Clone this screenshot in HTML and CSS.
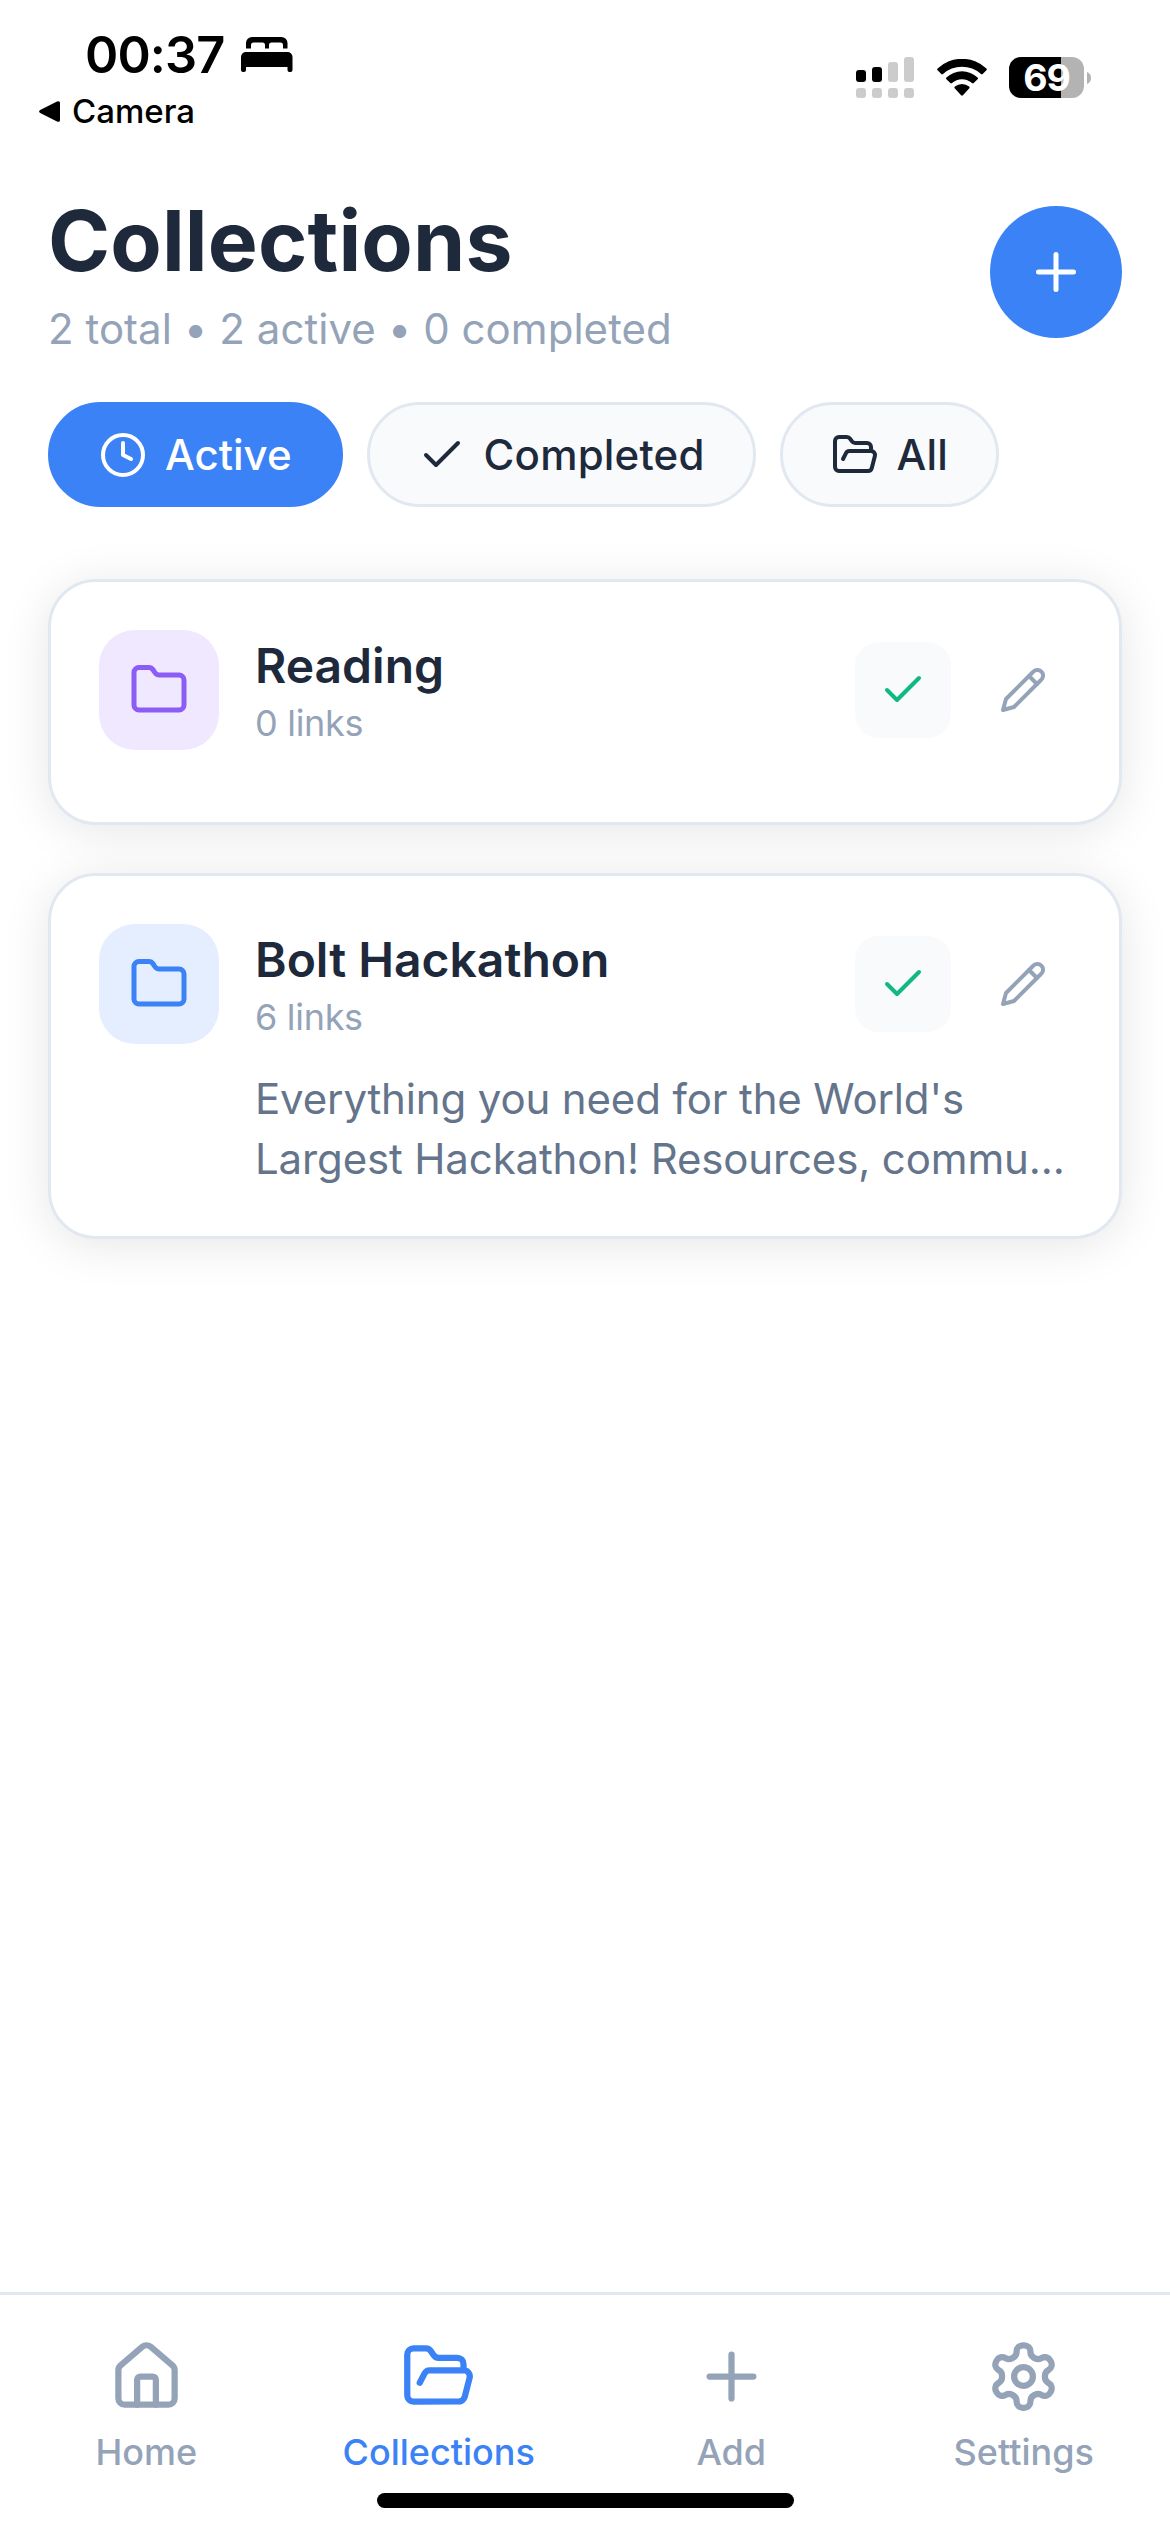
FILE: index.html
```html
<!DOCTYPE html>
<html lang="en">
<head>
<meta charset="utf-8">
<title>Collections</title>
<link rel="stylesheet" href="styles.css">
</head>
<body>
<svg class="defs" aria-hidden="true">
  <symbol id="check" viewBox="0 0 24 24"><path d="M20 6 9 17l-5-5"/></symbol>
  <symbol id="plus" viewBox="0 0 24 24"><path d="M5 12h14M12 5v14"/></symbol>
  <symbol id="clock" viewBox="0 0 24 24"><circle cx="12" cy="12" r="10"/><path d="M12 6v6l4 2"/></symbol>
  <symbol id="folder" viewBox="0 0 24 24"><path d="M20 20a2 2 0 0 0 2-2V8a2 2 0 0 0-2-2h-7.9a2 2 0 0 1-1.69-.9L9.6 3.9A2 2 0 0 0 7.93 3H4a2 2 0 0 0-2 2v13a2 2 0 0 0 2 2Z"/></symbol>
  <symbol id="folder-open" viewBox="0 0 24 24"><path d="m6 14 1.5-2.9A2 2 0 0 1 9.24 10H20a2 2 0 0 1 1.94 2.5l-1.54 6a2 2 0 0 1-1.95 1.5H4a2 2 0 0 1-2-2V5a2 2 0 0 1 2-2h3.9a2 2 0 0 1 1.69.9l.81 1.2a2 2 0 0 0 1.67.9H18a2 2 0 0 1 2 2v2"/></symbol>
  <symbol id="pencil" viewBox="0 0 24 24"><path d="M17 3a2.85 2.83 0 1 1 4 4L7.5 20.5 2 22l1.5-5.5Z"/><path d="m15 5 4 4"/></symbol>
  <symbol id="home" viewBox="0 0 24 24"><path d="M15 21v-8a1 1 0 0 0-1-1h-4a1 1 0 0 0-1 1v8"/><path d="M3 10a2 2 0 0 1 .709-1.528l7-5.999a2 2 0 0 1 2.582 0l7 5.999A2 2 0 0 1 21 10v9a2 2 0 0 1-2 2H5a2 2 0 0 1-2-2z"/></symbol>
  <symbol id="settings" viewBox="0 0 24 24"><path d="M12.22 2h-.44a2 2 0 0 0-2 2v.18a2 2 0 0 1-1 1.73l-.43.25a2 2 0 0 1-2 0l-.15-.08a2 2 0 0 0-2.73.73l-.22.38a2 2 0 0 0 .73 2.73l.15.1a2 2 0 0 1 1 1.72v.51a2 2 0 0 1-1 1.74l-.15.09a2 2 0 0 0-.73 2.73l.22.38a2 2 0 0 0 2.73.73l.15-.08a2 2 0 0 1 2 0l.43.25a2 2 0 0 1 1 1.73V20a2 2 0 0 0 2 2h.44a2 2 0 0 0 2-2v-.18a2 2 0 0 1 1-1.73l.43-.25a2 2 0 0 1 2 0l.15.08a2 2 0 0 0 2.73-.73l.22-.39a2 2 0 0 0-.73-2.73l-.15-.08a2 2 0 0 1-1-1.74v-.5a2 2 0 0 1 1-1.74l.15-.09a2 2 0 0 0 .73-2.73l-.22-.38a2 2 0 0 0-2.73-.73l-.15.08a2 2 0 0 1-2 0l-.43-.25a2 2 0 0 1-1-1.73V4a2 2 0 0 0-2-2z"/><circle cx="12" cy="12" r="3"/></symbol>
</svg>

<div class="status-bar">
  <div class="status-left">
    <div class="clock-row">
      <span class="time">00:37</span>
      <svg class="bed" viewBox="0 0 52 35"><path d="M5 11.500V6a6 6 0 0 1 6-6h29.500a6 6 0 0 1 6 6v5.500h-4.500V8q0-2.500-2.500-2.500h-9Q28 5.500 28 8v3.500h-4V8q0-2.500-2.500-2.500h-9Q10 5.500 10 8v3.500Z"/><path d="M0 33V20a5 5 0 0 1 5-5h41.500a5 5 0 0 1 5 5v13q0 2-2 2h-1q-2 0-2-2v-3H5v3q0 2-2 2H2q-2 0-2-2Z"/></svg>
    </div>
    <div class="back-row">
      <svg class="back-arrow" viewBox="0 0 21 21"><path d="M1.200 8.900 18 .5q3-1.200 3 1.500v17q0 2.700-3 1.500L1.200 12.100Q-1 10.500 1.200 8.900Z"/></svg>
      <span class="back-label">Camera</span>
    </div>
  </div>
  <div class="status-right">
    <svg class="signal" viewBox="0 0 58 41"><g class="on"><rect y="13" width="10" height="12" rx="3"/><rect x="16" y="10" width="10" height="15" rx="3"/></g><rect x="32" y="5" width="10" height="20" rx="3"/><rect x="48" width="10" height="25" rx="3"/><rect y="31" width="10" height="10" rx="3"/><rect x="16" y="31" width="10" height="10" rx="3"/><rect x="32" y="31" width="10" height="10" rx="3"/><rect x="48" y="31" width="10" height="10" rx="3"/></svg>
    <svg class="wifi" viewBox="0 0 50 37"><path d="M.6 9.500a35.500 35.500 0 0 1 48.800 0q.9.900 0 1.800l-3.700 3.800q-.8.800-1.700 0a28 28 0 0 0-38 0q-.9.800-1.700 0L.6 11.300q-.9-.9 0-1.800Z"/><path d="M9.400 18.400a23 23 0 0 1 31.200 0q.9.900 0 1.800l-3.900 3.900q-.8.700-1.700 0a15 15 0 0 0-20 0q-.9.700-1.700 0l-3.900-3.900q-.9-.9 0-1.800Z"/><path d="M17.900 27.600a11 11 0 0 1 14.200 0q1 .9 0 1.900l-6.200 6.800q-.9.900-1.800 0l-6.200-6.800q-1-1 0-1.900Z"/></svg>
    <div class="battery"><span class="level">69</span></div>
    <svg class="nub" viewBox="0 0 4 12"><path d="M0 0q4 1.500 4 6t-4 6Z"/></svg>
  </div>
</div>

<header class="header">
  <div class="heading">
    <h1 class="title">Collections</h1>
    <p class="summary">2 total • 2 active • 0 completed</p>
  </div>
  <button class="fab"><svg class="icon icon-60"><use href="#plus"/></svg></button>
</header>

<div class="filters">
  <button class="chip chip-active"><svg class="icon icon-48"><use href="#clock"/></svg><span>Active</span></button>
  <button class="chip"><svg class="icon icon-48"><use href="#check"/></svg><span>Completed</span></button>
  <button class="chip"><svg class="icon icon-48"><use href="#folder-open"/></svg><span>All</span></button>
</div>

<main class="list">
  <article class="card">
    <div class="card-head">
      <div class="badge purple"><svg class="icon icon-60"><use href="#folder"/></svg></div>
      <div class="card-text">
        <h2 class="card-title">Reading</h2>
        <p class="card-count">0 links</p>
      </div>
      <button class="action done"><svg class="icon icon-48"><use href="#check"/></svg></button>
      <button class="action edit"><svg class="icon icon-48"><use href="#pencil"/></svg></button>
    </div>
  </article>
  <article class="card">
    <div class="card-head">
      <div class="badge blue"><svg class="icon icon-60"><use href="#folder"/></svg></div>
      <div class="card-text">
        <h2 class="card-title">Bolt Hackathon</h2>
        <p class="card-count">6 links</p>
      </div>
      <button class="action done"><svg class="icon icon-48"><use href="#check"/></svg></button>
      <button class="action edit"><svg class="icon icon-48"><use href="#pencil"/></svg></button>
    </div>
    <p class="description">Everything you need for the World's<br>Largest Hackathon! Resources, commu...</p>
  </article>
</main>

<nav class="tabs">
  <div class="tab-row">
    <a class="tab"><svg class="icon icon-75"><use href="#home"/></svg><span>Home</span></a>
    <a class="tab tab-active"><svg class="icon icon-75"><use href="#folder-open"/></svg><span>Collections</span></a>
    <a class="tab"><svg class="icon icon-75"><use href="#plus"/></svg><span>Add</span></a>
    <a class="tab"><svg class="icon icon-75"><use href="#settings"/></svg><span>Settings</span></a>
  </div>
  <div class="home-indicator"></div>
</nav>
</body>
</html>
```
FILE: styles.css
```css
* { box-sizing: border-box; margin: 0; padding: 0; }

body {
  display: flex;
  flex-direction: column;
  height: 2532px;
  background: #fff;
  color: #1e293b;
  font-family: Inter, "Liberation Sans", sans-serif;
  overflow: hidden;
}

button { font: inherit; color: inherit; border: 0; background: none; }

.defs { display: none; }

.icon {
  flex: none;
  fill: none;
  stroke: currentColor;
  stroke-width: 2;
  stroke-linecap: round;
  stroke-linejoin: round;
}
.icon-48 { width: 48px; height: 48px; }
.icon-60 { width: 60px; height: 60px; }
.icon-75 { width: 75px; height: 75px; }

/* Status bar */
.status-bar {
  display: flex;
  justify-content: space-between;
  height: 189px;
  color: #000;
}
.status-left { padding-top: 24px; }
.clock-row { display: flex; align-items: flex-start; padding-left: 85px; }
.time {
  width: 156px;
  font-size: 50.500px;
  font-weight: 600;
  line-height: 61px;
  letter-spacing: -0.9px;
}
.bed { width: 52px; height: 35px; margin-top: 13px; }
.back-row { display: flex; align-items: center; gap: 12px; padding-left: 39px; margin-top: 5px; }
.back-arrow { width: 21px; height: 21px; }
.back-label { font-size: 33px; font-weight: 500; line-height: 42px; }

.status-right { display: flex; align-items: flex-start; padding: 57px 79px 0 0; }
.signal { width: 58px; height: 41px; fill: #ccc; }
.signal .on { fill: #000; }
.wifi { width: 50px; height: 37px; margin: 2px 22px 0 23px; }
.battery {
  width: 75px;
  height: 41px;
  border-radius: 12px;
  background: linear-gradient(90deg, #000 52px, #b3b3b3 52px);
  color: #fff;
  text-align: center;
}
.level { font-size: 37.500px; font-weight: 700; line-height: 41px; display: block; letter-spacing: -1px; }
.nub { width: 4px; height: 12px; margin: 15px 0 0 3px; fill: #b3b3b3; }

/* Header */
.header {
  display: flex;
  justify-content: space-between;
  align-items: center;
  padding: 0 48px;
  height: 165px;
}
.title { font-size: 84px; font-weight: 700; line-height: 104px; margin-bottom: 10px; letter-spacing: 0.15px; }
.summary { font-size: 42px; line-height: 51px; letter-spacing: 0.04px; color: #94a3b8; }
.fab {
  display: flex;
  align-items: center;
  justify-content: center;
  width: 132px;
  height: 132px;
  border-radius: 50%;
  background: #3b82f6;
  color: #fff;
}

/* Filters */
.filters { display: flex; gap: 24px; padding: 48px 48px 72px; }
.chip {
  display: flex;
  align-items: center;
  gap: 18px;
  height: 105px;
  padding: 0 48px;
  border: 3px solid #e2e8f0;
  border-radius: 60px;
  background: #f8fafc;
  font-size: 42px;
  font-weight: 500;
  line-height: 51px;
  letter-spacing: 0.2px;
}
.chip-active { background: #3b82f6; border-color: #3b82f6; color: #fff; letter-spacing: 0; }

/* Cards */
.list { display: flex; flex-direction: column; gap: 48px; padding: 0 48px; flex: 1; }
.card {
  padding: 48px;
  border: 3px solid #e2e8f0;
  border-radius: 48px;
  background: #fff;
  box-shadow: 0 6px 48px rgba(0, 0, 0, 0.1);
}
.card-head { display: flex; align-items: center; margin-bottom: 24px; }
.badge {
  display: flex;
  align-items: center;
  justify-content: center;
  width: 120px;
  height: 120px;
  border-radius: 36px;
}
.purple { background: #efe8fe; color: #8b5cf6; }
.blue { background: #e4eefe; color: #3b82f6; }
.card-text { flex: 1; margin-left: 36px; padding-top: 1px; }
.card-title { font-size: 48px; font-weight: 600; line-height: 58px; margin-bottom: 6px; }
.card-count { font-size: 36px; line-height: 44px; letter-spacing: -0.3px; color: #94a3b8; }
.action {
  display: flex;
  align-items: center;
  justify-content: center;
  width: 96px;
  height: 96px;
  border-radius: 24px;
}
.done { background: #f8fafc; color: #10b981; }
.edit { margin-left: 24px; color: #94a3b8; }
.description {
  margin: 0 0 -1px 156px;
  padding-top: 1px;
  font-size: 42px;
  line-height: 60px;
  letter-spacing: -0.14px;
  color: #64748b;
  white-space: nowrap;
}

/* Tab bar */
.tabs {
  display: flex;
  flex-direction: column;
  align-items: center;
  justify-content: space-between;
  height: 240px;
  padding: 44px 0 24px;
  border-top: 3px solid #e2e8f0;
  background: #fff;
}
.tab-row { display: flex; align-self: stretch; }
.tab {
  flex: 1 1 0;
  display: flex;
  flex-direction: column;
  align-items: center;
  gap: 16px;
  color: #94a3b8;
  font-size: 36px;
  font-weight: 500;
  line-height: 44px;
}
.tab-active { color: #3b82f6; }
.home-indicator { width: 417px; height: 15px; border-radius: 8px; background: #000; }
```
